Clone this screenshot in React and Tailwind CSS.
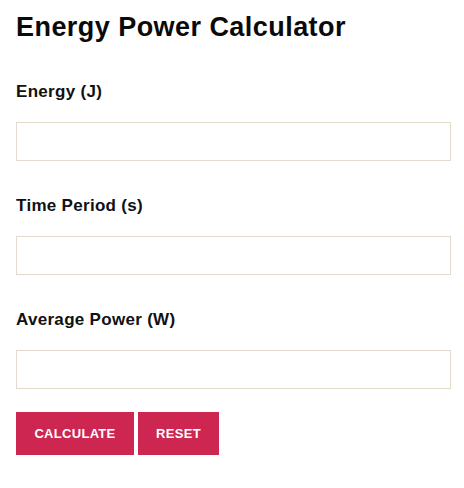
import React from "react";

function Field({ label, mt }) {
  return (
    <div className={`flex flex-col ${mt}`}>
      <label className="text-[17px] leading-[24px] font-bold text-[#111] tracking-[0.3px]">{label}</label>
      <input type="text" className="mt-[18px] w-[435px] h-[39px] border border-[#e2dacb] bg-white outline-none" />
    </div>
  );
}

export default function App() {
  return (
    <div className="bg-white w-[464px] h-[488px] pl-4 pt-[11px]" style={{ fontFamily: "'Liberation Sans', Arial, sans-serif" }}>
      <h2 className="text-[27px] leading-[32px] font-bold text-[#0a0a0a] tracking-[0.45px]">Energy Power Calculator</h2>
      <Field label="Energy (J)" mt="mt-[37px]" />
      <Field label="Time Period (s)" mt="mt-[33px]" />
      <Field label="Average Power (W)" mt="mt-[33px]" />
      <div className="flex gap-1 mt-[23px]">
        <button className="h-[43px] w-[118px] bg-[#cc2651] text-white text-[13px] font-bold uppercase tracking-[0.3px]">Calculate</button>
        <button className="h-[43px] w-[81px] bg-[#cc2651] text-white text-[13px] font-bold uppercase tracking-[0.3px]">Reset</button>
      </div>
    </div>
  );
}
